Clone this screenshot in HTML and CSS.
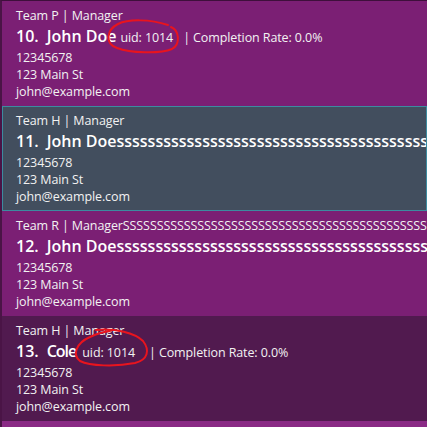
FILE: index.html
```html
<!DOCTYPE html>
<html>
<head>
<meta charset="utf-8">
<link rel="stylesheet" href="styles.css">
</head>
<body>
<div class="list">
  <div class="row row-purple">
    <div class="small">Team P | Manager</div>
    <div class="name-line"><span class="idx">10.</span><span class="name">John Doe</span><span class="uid">uid: 1014</span><span class="rate">| Completion Rate: 0.0%</span></div>
    <div class="small">12345678</div>
    <div class="small">123 Main St</div>
    <div class="small">john@example.com</div>
  </div>
  <div class="row row-selected">
    <div class="small">Team H | Manager</div>
    <div class="name-line"><span class="idx">11.</span><span class="name">John Doesssssssssssssssssssssssssssssssssssssssssssssssssssssssssssssssssssss</span></div>
    <div class="small">12345678</div>
    <div class="small">123 Main St</div>
    <div class="small">john@example.com</div>
  </div>
  <div class="row row-purple">
    <div class="small">Team R | ManagerSSSSSSSSSSSSSSSSSSSSSSSSSSSSSSSSSSSSSSSSSSSSSSSSSSSSSSSS</div>
    <div class="name-line"><span class="idx">12.</span><span class="name">John Doesssssssssssssssssssssssssssssssssssssssssssssssssssssssssssssssssssss</span></div>
    <div class="small">12345678</div>
    <div class="small">123 Main St</div>
    <div class="small">john@example.com</div>
  </div>
  <div class="row row-dark">
    <div class="small">Team H | Manager</div>
    <div class="name-line"><span class="idx">13.</span><span class="name name-short">Cole</span><span class="uid uid-tight">uid: 1014</span><span class="rate rate-wide">| Completion Rate: 0.0%</span></div>
    <div class="small">12345678</div>
    <div class="small">123 Main St</div>
    <div class="small">john@example.com</div>
  </div>
  <div class="strip"></div>
  <svg class="marks" width="427" height="427" viewBox="0 0 427 427">
    <path d="M168 25 C150 19, 128 19, 118 24 C106 30, 105 44, 117 48 C130 53, 160 54, 172 49 C181 44, 179 30, 171 27" />
    <path d="M96 330 C115 328, 135 333, 143 341 C150 350, 148 360, 135 363 C115 367, 90 366, 80 361 C72 355, 76 343, 90 337 C96 334, 103 332, 110 331" />
  </svg>
</div>
</body>
</html>
```
FILE: styles.css
```css
html, body {
  margin: 0;
  padding: 0;
  background: #8a2a85;
}
body {
  width: 427px;
  height: 427px;
  overflow: hidden;
  font-family: "Open Sans", "Noto Sans", sans-serif;
  color: #f2f2f2;
}
.list {
  position: relative;
  display: flex;
  flex-direction: column;
  border-top: 1px solid #3e0f3b;
  border-left: 2px solid #4a1446;
  height: 426px;
  overflow: hidden;
}
.row {
  box-sizing: border-box;
  height: 105px;
  flex: none;
  padding: 6px 0 0 14px;
  white-space: nowrap;
  overflow: hidden;
}
.row-purple { background: #7b1f74; }
.row-dark { background: #511a4f; }
.row-selected {
  background: #424e5e;
  border: 1px solid #3c8ba0;
  padding: 5px 0 0 13px;
}
.strip {
  flex: 1;
  background: #8a2a85;
}
.small {
  font-size: 12.5px;
  line-height: 17px;
  letter-spacing: -0.1px;
}
.name-line {
  height: 25px;
  line-height: 25px;
  display: flex;
  align-items: baseline;
}
.idx, .name {
  font-size: 16px;
  font-weight: 600;
  color: #ffffff;
}
.idx {
  margin-right: 8px;
}
.name-short {
  letter-spacing: -1px;
}
.uid, .rate {
  font-size: 12.5px;
  letter-spacing: -0.1px;
}
.uid { margin-left: 4px; }
.uid-tight { margin-left: 6px; }
.rate { margin-left: 10px; }
.rate-wide { margin-left: 14px; }
.marks {
  position: absolute;
  left: -2px;
  top: -1px;
  pointer-events: none;
}
.marks path {
  fill: none;
  stroke: #e8141e;
  stroke-width: 2;
  stroke-linecap: round;
}
```
